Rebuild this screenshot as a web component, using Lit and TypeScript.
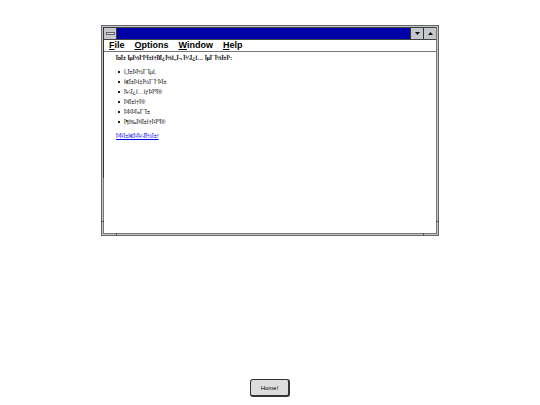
import { LitElement, html, css } from "lit";
import { customElement } from "lit/decorators.js";

// UTF-8 bytes shown as Windows-1252 characters.
const latin1 = (text: string): string => {
  const high: Record<number, string> = {
    0x80: "€", 0x82: "‚", 0x83: "ƒ", 0x84: "„", 0x85: "…", 0x86: "†",
    0x87: "‡", 0x88: "ˆ", 0x89: "‰", 0x8e: "Ž", 0x93: "“", 0x9a: "š", 0x9c: "œ",
  };
  return Array.from(new TextEncoder().encode(text), (b) =>
    b > 0x7f && b < 0xa0 ? high[b] ?? "" : String.fromCharCode(b)
  ).join("");
};

const interests = ["ταινίες", "παιχνίδια", "μουσική", "γραφή", "βιβλία", "ζωγραφική"];
const menus = ["File", "Options", "Window", "Help"];

@customElement("app-root")
export class AppRoot extends LitElement {
  static styles = css`
    :host {
      display: flex;
      flex-direction: column;
      align-items: center;
      justify-content: space-between;
      min-height: 100vh;
      box-sizing: border-box;
      padding: 25px 20px 8px;
      background: #fff;
      color: #000;
      font-family: "Liberation Sans", Arial, sans-serif;
    }
    .window {
      position: relative;
      width: 68%;
      max-width: 338px;
      min-height: 211px;
      box-sizing: border-box;
      border: 1px solid #666;
      padding: 1px;
      background: #c0c4c4;
      display: flex;
      flex-direction: column;
    }
    .inner { flex: 1; border: 1px solid #777; border-top-color: #444; background: #fff; }
    .notch { position: absolute; background: #555; }
    .notch.h { width: 3px; height: 1px; bottom: 13px; }
    .notch.v { width: 1px; height: 3px; bottom: -1px; }
    .left { left: -1px; }
    .right { right: -1px; }
    .near { left: 14px; }
    .far { right: 14px; }
    .edge { position: absolute; left: 1px; top: 1px; width: 1px; height: 151px; background: #333; }
    .title { display: flex; height: 11px; background: #0000a8; border-bottom: 1px solid #444; }
    .title button {
      width: 13px; padding: 0; border: 0; background: #c4c8cc;
      box-sizing: border-box;
      display: flex; align-items: center; justify-content: center;
    }
    .title .system { border-right: 1px solid #333; }
    .title .size { border-left: 1px solid #333; }
    .title svg { display: block; width: 9px; height: 9px; }
    .space { flex: 1; }
    nav { display: flex; gap: 10px; padding: 0 5px; height: 11px; border-bottom: 1px solid #777; }
    nav button {
      border: 0; padding: 0; background: none; color: #000;
      font: bold 9px/11px "Liberation Sans", Arial, sans-serif;
    }
    .content { padding: 1px 12px; line-height: 10px; font-size: 6px; }
    h1 { font-size: 6px; line-height: 10px; margin: 0 0 4px; }
    ul { margin: 0 0 4px; padding: 0 0 0 2px; list-style: none; }
    li { display: flex; align-items: center; gap: 4px; }
    li::before { content: ""; width: 2px; height: 2px; background: #222; }
    a { color: #00e; }
    .home {
      width: 40px; height: 18px; padding: 0;
      border: 1px solid #333; border-right-width: 2px; border-bottom-width: 2px;
      border-radius: 3px; background: #ddd; color: #000;
      font: 6px "Liberation Sans", Arial, sans-serif;
    }
  `;

  render() {
    return html`
      <main class="window">
        <div class="inner">
          <div class="title">
            <button class="system" aria-label="System menu">
              <svg viewBox="0 0 9 9"><path d="M0 3h9v3H0z" fill="#666" /><path d="M1 4h7v1H1z" fill="#ddd" /></svg>
            </button>
            <span class="space"></span>
            <button class="size" aria-label="Minimize">
              <svg viewBox="0 0 9 9"><path d="M2 3h5L4.500 6z" fill="#111" /></svg>
            </button>
            <button class="size" aria-label="Maximize">
              <svg viewBox="0 0 9 9"><path d="M2 6h5L4.500 3z" fill="#111" /></svg>
            </button>
          </div>
          <nav>${menus.map((m) => html`<button><u>${m[0]}</u>${m.slice(1)}</button>`)}</nav>
          <section class="content">
            <h1>${latin1("Τα ενδιαφέροντά μου είναι:")}</h1>
            <ul>${interests.map((i) => html`<li>${latin1(i)}</li>`)}</ul>
            <a href="#">${latin1("γιαπιμένα!")}</a>
          </section>
        </div>
        <span class="edge"></span>
        <span class="notch h left"></span>
        <span class="notch h right"></span>
        <span class="notch v near"></span>
        <span class="notch v far"></span>
      </main>
      <button class="home">Home!</button>
    `;
  }
}
